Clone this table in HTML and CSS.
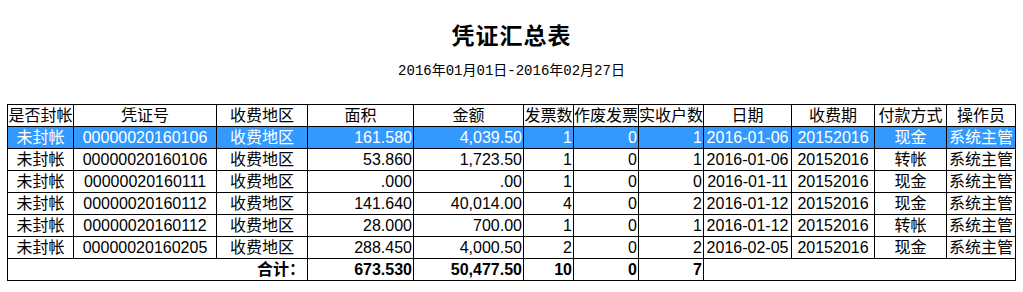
FILE: index.html
```html
<!DOCTYPE html>
<html lang="zh-CN">
<head>
<meta charset="utf-8">
<title>凭证汇总表</title>
<link rel="stylesheet" href="styles.css">
</head>
<body>
<h1 class="title">凭证汇总表</h1>
<div class="range">2016年01月01日-2016年02月27日</div>
<table class="grid">
  <colgroup>
    <col class="c1"><col class="c2"><col class="c3"><col class="c4"><col class="c5"><col class="c6">
    <col class="c7"><col class="c8"><col class="c9"><col class="c10"><col class="c11"><col class="c12">
  </colgroup>
  <thead>
    <tr>
      <th>是否封帐</th><th>凭证号</th><th>收费地区</th><th>面积</th><th>金额</th><th>发票数</th>
      <th>作废发票</th><th>实收户数</th><th>日期</th><th>收费期</th><th>付款方式</th><th>操作员</th>
    </tr>
  </thead>
  <tbody>
    <tr class="sel">
      <td class="ctr">未封帐</td><td class="ctr">00000020160106</td><td class="ctr">收费地区</td><td class="num">161.580</td><td class="num">4,039.50</td><td class="num">1</td>
      <td class="num">0</td><td class="num">1</td><td class="ctr">2016-01-06</td><td class="ctr">20152016</td><td class="ctr">现金</td><td class="ctr">系统主管</td>
    </tr>
    <tr>
      <td class="ctr">未封帐</td><td class="ctr">00000020160106</td><td class="ctr">收费地区</td><td class="num">53.860</td><td class="num">1,723.50</td><td class="num">1</td>
      <td class="num">0</td><td class="num">1</td><td class="ctr">2016-01-06</td><td class="ctr">20152016</td><td class="ctr">转帐</td><td class="ctr">系统主管</td>
    </tr>
    <tr>
      <td class="ctr">未封帐</td><td class="ctr">00000020160111</td><td class="ctr">收费地区</td><td class="num">.000</td><td class="num">.00</td><td class="num">1</td>
      <td class="num">0</td><td class="num">0</td><td class="ctr">2016-01-11</td><td class="ctr">20152016</td><td class="ctr">现金</td><td class="ctr">系统主管</td>
    </tr>
    <tr>
      <td class="ctr">未封帐</td><td class="ctr">00000020160112</td><td class="ctr">收费地区</td><td class="num">141.640</td><td class="num">40,014.00</td><td class="num">4</td>
      <td class="num">0</td><td class="num">2</td><td class="ctr">2016-01-12</td><td class="ctr">20152016</td><td class="ctr">现金</td><td class="ctr">系统主管</td>
    </tr>
    <tr>
      <td class="ctr">未封帐</td><td class="ctr">00000020160112</td><td class="ctr">收费地区</td><td class="num">28.000</td><td class="num">700.00</td><td class="num">1</td>
      <td class="num">0</td><td class="num">1</td><td class="ctr">2016-01-12</td><td class="ctr">20152016</td><td class="ctr">转帐</td><td class="ctr">系统主管</td>
    </tr>
    <tr>
      <td class="ctr">未封帐</td><td class="ctr">00000020160205</td><td class="ctr">收费地区</td><td class="num">288.450</td><td class="num">4,000.50</td><td class="num">2</td>
      <td class="num">0</td><td class="num">2</td><td class="ctr">2016-02-05</td><td class="ctr">20152016</td><td class="ctr">现金</td><td class="ctr">系统主管</td>
    </tr>
    <tr class="total">
      <td colspan="3" class="num label">合计：</td><td class="num">673.530</td><td class="num">50,477.50</td><td class="num">10</td>
      <td class="num">0</td><td class="num">7</td><td colspan="4"></td>
    </tr>
  </tbody>
</table>
</body>
</html>
```

FILE: styles.css
```css
html, body {
  margin: 0;
  padding: 0;
  background: #fff;
  color: #000;
}

body {
  font-family: "Liberation Sans", "Noto Sans CJK SC", sans-serif;
}

.title {
  margin: 0;
  padding-top: 22px;
  font-family: "Noto Sans CJK SC", sans-serif;
  font-size: 23px;
  line-height: 24px;
  font-weight: bold;
  text-align: center;
  letter-spacing: 1px;
}

.range {
  margin-top: 18px;
  font-family: "Liberation Mono", "Noto Sans CJK SC", monospace;
  font-size: 14px;
  line-height: 14px;
  text-align: center;
}

.grid {
  margin: 26px 0 0 7px;
  border-collapse: collapse;
  table-layout: fixed;
  width: 1009px;
  font-size: 16px;
}

.c1 { width: 66px; }
.c2 { width: 143px; }
.c3 { width: 91px; }
.c4 { width: 106px; }
.c5 { width: 110px; }
.c6 { width: 50px; }
.c7 { width: 65px; }
.c8 { width: 65px; }
.c9 { width: 88px; }
.c10 { width: 83px; }
.c11 { width: 72px; }
.c12 { width: 69px; }

.grid th,
.grid td {
  border: 1px solid #000;
  padding: 0;
  height: 21px;
  line-height: 21px;
  white-space: nowrap;
  overflow: hidden;
}

.grid th {
  font-weight: normal;
  text-align: center;
}

.grid td.ctr { text-align: center; }
.grid td.num { text-align: right; padding-right: 1px; }

.grid tr.sel td {
  background: #3399ff;
  color: #fff;
}

.grid tr.sel td:first-child {
  box-shadow: -7px 0 0 #3399ff;
}

.grid tr.sel td:last-child {
  box-shadow: 8px 0 0 #3399ff;
}

.grid tr.total td {
  font-weight: bold;
}

.grid tr.total td.label {
  padding-right: 2px;
}
```
